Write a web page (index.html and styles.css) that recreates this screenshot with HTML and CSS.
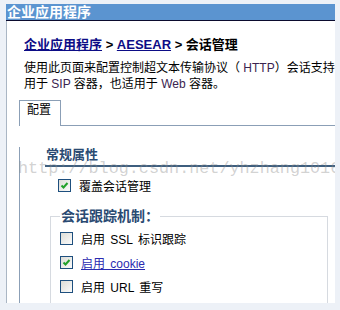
FILE: index.html
```html
<!DOCTYPE html>
<html lang="zh">

<head>
    <meta charset="UTF-8">
    <meta name="viewport" content="width=device-width, initial-scale=1.0">
    <title>会话管理</title>
    <link rel="stylesheet" href="styles.css">
</head>

<body>
    <div class="page">
        <div class="titlebar">企业应用程序</div>
        <div class="content">
            <div class="intro">
                <div class="crumbs">
                    <a href="#">企业应用程序</a> &gt; <a href="#">AESEAR</a> &gt; 会话管理
                </div>
                <div class="desc">
                    <p>使用此页面来配置控制超文本传输协议（ <span class="en">HTTP</span>）会话支持行为的设置。这些设置适</p>
                    <p>用于 <span class="en">SIP</span> 容器，也适用于 <span class="en">Web</span> 容器。</p>
                </div>
            </div>

            <div class="tabbar">
                <div class="tab">配置</div>
                <div class="tab-fill"></div>
            </div>
            <div class="panel">
                <div class="section">
                    <h3 class="section-title">常规属性</h3>
                    <div class="row first">
                        <span class="check"><svg viewBox="0 0 11 11"><path d="M2.5 5.5 L4.5 7.5 L8.5 3" /></svg></span>
                        <span>覆盖会话管理</span>
                    </div>
                    <fieldset class="group">
                        <legend>会话跟踪机制：</legend>
                        <div class="row">
                            <span class="check"></span>
                            <span>启用 SSL 标识跟踪</span>
                        </div>
                        <div class="row">
                            <span class="check"><svg viewBox="0 0 11 11"><path d="M2.5 5.5 L4.5 7.5 L8.5 3" /></svg></span>
                            <a href="#">启用 cookie</a>
                        </div>
                        <div class="row">
                            <span class="check"></span>
                            <span>启用 URL 重写</span>
                        </div>
                    </fieldset>
                </div>
            </div>
        </div>
        <div class="watermark">http://blog.csdn.net/yhzhang1016</div>
    </div>
</body>

</html>
```

FILE: styles.css
```css
* {
    box-sizing: border-box;
    margin: 0;
    padding: 0;
}

body {
    background-color: #edf1f7;
    font-family: "Liberation Sans", "Noto Sans CJK SC", sans-serif;
    font-size: 12px;
    color: #000;
}

.page {
    position: relative;
    margin: 4px 5px 0 6px;
    height: 299px;
    background-color: #fff;
    overflow: hidden;
}

.titlebar {
    height: 17px;
    background-color: #5b94d0;
    border-bottom: 1px solid #0b0b2e;
    color: #fff;
    font-size: 14px;
    font-weight: bold;
    line-height: 16px;
    padding-left: 1px;
    white-space: nowrap;
}

.content {
    border-left: 1px solid #aab6c4;
    height: 282px;
    padding-left: 12px;
}

.intro {
    padding-left: 5px;
}

.crumbs {
    padding-top: 16px;
    font-size: 13px;
    font-weight: bold;
    line-height: 16px;
    white-space: nowrap;
}

.crumbs a {
    color: #0c0c86;
}

.desc {
    margin-top: 7px;
    line-height: 16px;
    white-space: nowrap;
}

.en {
    color: #3a2450;
}

.tabbar {
    display: flex;
    margin-top: 8px;
}

.tab {
    width: 42px;
    height: 26px;
    border: 1px solid #8b9fb6;
    border-bottom: none;
    padding-left: 7px;
    padding-top: 1px;
    line-height: 16px;
}

.tab-fill {
    flex: 1;
    border-bottom: 1px solid #8b9fb6;
}

.panel {
    border-left: 1px solid #8b9fb6;
    height: 200px;
    padding-left: 25px;
}

.section-title {
    margin-top: 21px;
    padding-left: 1px;
    padding-bottom: 2px;
    border-bottom: 2px solid #3e5e7e;
    color: #2a4a72;
    font-size: 13px;
    line-height: 16px;
}

.row {
    display: flex;
    align-items: center;
    gap: 8px;
    height: 16px;
    margin-top: 8px;
    white-space: nowrap;
    word-spacing: 2px;
}

.row.first {
    margin-top: 10px;
    padding-left: 13px;
}

.row a {
    color: #2a2ab0;
}

.check {
    flex: none;
    width: 13px;
    height: 13px;
    border: 1px solid #1e4f7e;
    background: linear-gradient(135deg, #dcdcd6, #fbfbfb);
    display: flex;
}

.check svg {
    width: 11px;
    height: 11px;
    fill: none;
    stroke: #22a12a;
    stroke-width: 2;
}

.group {
    margin: 15px 7px 0 5px;
    border: 1px solid #d6dae0;
    padding: 0 0 10px 9px;
    height: 120px;
}

.group legend {
    padding: 0 1px;
    color: #2a4a72;
    font-size: 14px;
    font-weight: bold;
    line-height: 16px;
}

.group .row:first-of-type {
    margin-top: 6px;
}

.watermark {
    position: absolute;
    left: 12px;
    top: 155px;
    font-family: "Liberation Mono", monospace;
    font-size: 16.8px;
    color: rgba(140, 140, 140, 0.4);
    white-space: nowrap;
    pointer-events: none;
}
```
